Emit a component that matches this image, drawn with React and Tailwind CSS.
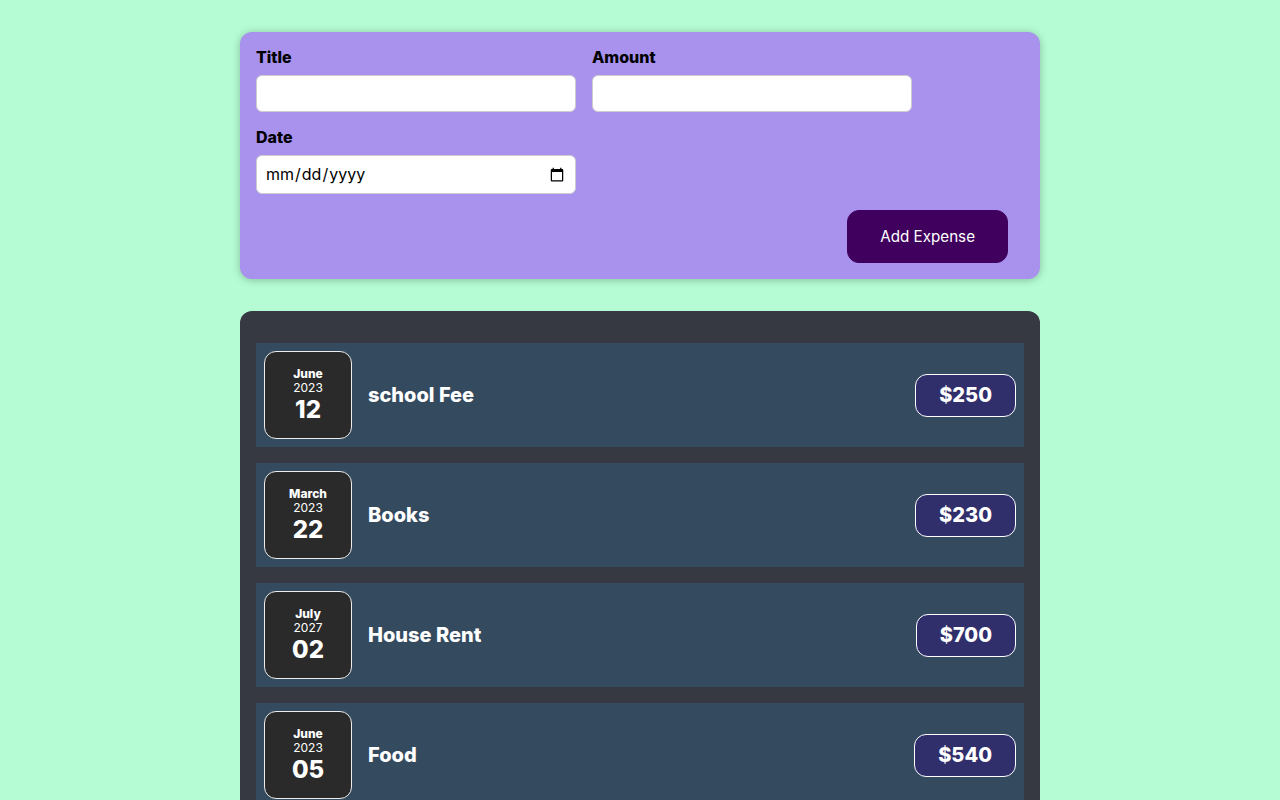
import React from "react";

const expenses = [
    {id: 1, month: "June", year: "2023", day: "12", title: "school Fee", amount: 250},
    {id: 2, month: "March", year: "2023", day: "22", title: "Books", amount: 230},
    {id: 3, month: "July", year: "2027", day: "02", title: "House Rent", amount: 700},
    {id: 4, month: "June", year: "2023", day: "05", title: "Food", amount: 540},
];

const Field = ({label, type = "text"}) => (
    <div>
        <label className="block font-extrabold mb-2 text-black leading-[19px]">{label}</label>
        <input
            type={type}
            className={`block w-80 max-w-full px-2 rounded-md border border-[#cccccc] bg-white text-black leading-[19px] ${type === "date" ? "h-[39px]" : "h-[37px]"}`}
        />
    </div>
);

const ExpenseDate = ({month, year, day}) => (
    <div className="flex flex-col items-center justify-center w-[88px] h-[88px] shrink-0 border border-[#ececec] bg-[#2a2a2a] text-white rounded-xl">
        <div className="text-xs font-extrabold leading-[14px]">{month}</div>
        <div className="text-xs leading-[14px]">{year}</div>
        <div className="text-2xl font-extrabold leading-[29px]">{day}</div>
    </div>
);

const ExpenseItem = ({item}) => (
    <div className="flex items-center justify-between p-2 my-4 bg-[#344a5f]">
        <ExpenseDate month={item.month} year={item.year} day={item.day}/>
        <div className="flex flex-1 items-center">
            <h2 className="flex-1 mx-4 text-xl font-extrabold text-white">{item.title}</h2>
            <div className="text-xl font-extrabold text-white bg-[#302e6b] border border-white px-[23px] pt-2 pb-[9px] leading-6 rounded-xl">
                ${item.amount}
            </div>
        </div>
    </div>
);

export default function App() {
    return (
        <div className="min-h-screen bg-[#b5fcd4] font-['Inter',sans-serif] py-8">
            <div className="w-[800px] mx-auto flex flex-col gap-8">
                {/* New expense form */}
                <form
                    className="bg-[#a892ee] p-4 rounded-xl shadow-[0_1px_8px_rgba(0,0,0,0.25)]"
                    onSubmit={(e) => e.preventDefault()}
                >
                    <div className="flex flex-wrap gap-4 mb-4">
                        <Field label="Title"/>
                        <Field label="Amount" type="number"/>
                        <Field label="Date" type="date"/>
                    </div>
                    <div className="text-right">
                        <button
                            type="submit"
                            className="px-8 py-4 mr-4 border border-[#40005d] bg-[#40005d] text-white rounded-xl leading-[19px] text-[15.2px]"
                        >
                            Add Expense
                        </button>
                    </div>
                </form>

                {/* Expense list */}
                <div className="bg-[#363842] p-4 rounded-xl">
                    {expenses.map((e) => (
                        <ExpenseItem key={e.id} item={e}/>
                    ))}
                </div>
            </div>
        </div>
    );
}
